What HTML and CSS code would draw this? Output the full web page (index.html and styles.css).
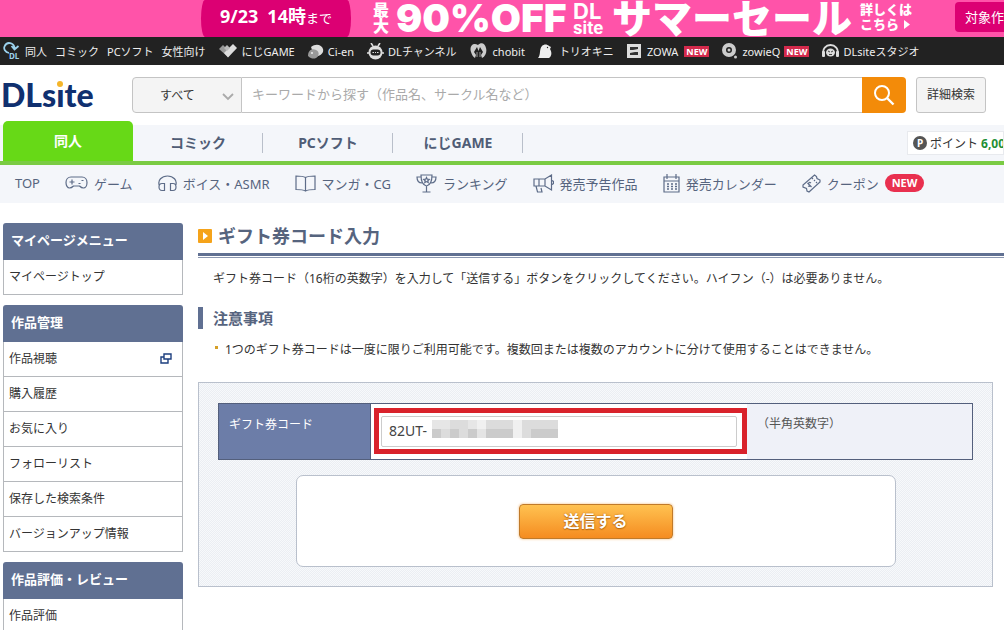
FILE: index.html
```html
<!DOCTYPE html>
<html lang="ja">
<head>
<meta charset="utf-8">
<title>ギフト券コード入力</title>
<link rel="stylesheet" href="styles.css">
</head>
<body>
<div class="page">
  <div class="banner">
    <div class="deadline"><b>9/23&ensp;14時</b>まで</div>
    <div class="sale">
      <span class="stack stack-max"><span>最</span><span>大</span></span>
      <span class="off">90%OFF</span>
      <span class="stack stack-site"><span>DL</span><span>site</span></span>
      <span class="sale-name">サマーセール</span>
      <span class="stack stack-more"><span>詳しくは</span><span>こちら<svg width="8" height="9" viewBox="0 0 8 9"><path d="M1 0l6 4.500-6 4.500z" fill="#fff"/></svg></span></span>
    </div>
    <a class="banner-btn" href="#">対象作品</a>
  </div>

  <nav class="services">
    <a href="#"><svg width="18" height="18" viewBox="0 0 18 18"><path d="M6 11C2 10 .5 7 1.500 4.500 3 1 6 .5 8.500 1.500c2.500 1 3 3 3 5M8.500 4l3 3.500L15.500 4" fill="none" stroke="#9cd3ee" stroke-width="1.800"/><text x="6" y="17" class="mini-dl">DL</text></svg>同人</a>
    <a href="#">コミック</a>
    <a href="#">PCソフト</a>
    <a href="#">女性向け</a>
    <a href="#" class="wide"><svg width="19" height="14" viewBox="0 0 19 14"><path d="M0 5l4-4 8 8-3 4z" fill="#999"/><path d="M5 9l9-9 4 4-9 9.500z" fill="#ddd"/><path d="M5 4l3-3 3 3-3 3z" fill="#bbb"/></svg>にじGAME</a>
    <a href="#" class="wide"><svg width="16" height="15" viewBox="0 0 16 15"><path d="M3 3C8-1 14 1 15 5c1 4-2 6-5 7l-3 2z" fill="#ddd"/><path d="M0 12C0 6 4 4 8 6c4 2 3 6 0 8-2 1-5 1-8-2z" fill="#999"/><circle cx="4" cy="9" r="1" fill="#eee"/></svg>Ci-en</a>
    <a href="#" class="wide"><svg width="17" height="17" viewBox="0 0 17 17"><path d="M4 0l2 3M13 0l-2 3M0 10h17" stroke="#ddd" stroke-width="1.600"/><circle cx="8.500" cy="9.500" r="7" fill="#ddd"/><rect x="3.500" y="6.500" width="10" height="6" rx="3" fill="#222"/><path d="M5.500 9.500h1.500m1 0h1m1 0h1.500" stroke="#ddd"/></svg>DLチャンネル</a>
    <a href="#" class="wide spaced"><svg width="17" height="16" viewBox="0 0 17 16"><path d="M8 2C3-1-1 3 1 9c1 3 2 5 4 6l1-3-2-3 3-5 1.500 4L10 4l3 5-2 3 1 3c4-2 5-7 4-10-1-5-5-6-8-3z" fill="#ccc"/><path d="M7 9v5M10 9v5" stroke="#999"/></svg>chobit</a>
    <a href="#" class="wide spaced"><svg width="15" height="15" viewBox="0 0 15 15"><path d="M0 14C3 11 1 5 4 2c2-2 5-2 7 0l2 1-1 2c2 3 2 7-1 9H2z" fill="#eee"/><circle cx="9.500" cy="3.500" r=".7" fill="#222"/></svg>トリオキニ</a>
    <a href="#" class="wide spaced"><svg width="14" height="14" viewBox="0 0 14 14"><rect width="14" height="14" fill="#ddd"/><path d="M3 3h8v2L6 6H3zM11 11H3V9l5-1h3z" fill="#333"/></svg>ZOWA<span class="new-tag">NEW</span></a>
    <a href="#" class="wide"><svg width="16" height="16" viewBox="0 0 16 16"><circle cx="7" cy="7" r="5" fill="none" stroke="#ccc" stroke-width="4"/><circle cx="7" cy="7" r="1.500" fill="#ccc"/><circle cx="13.500" cy="14" r="1.500" fill="#ccc"/></svg>zowieQ<span class="new-tag">NEW</span></a>
    <a href="#" class="wide"><svg width="17" height="14" viewBox="0 0 17 14"><path d="M1.500 10C0 5 4 1 8.500 1S17 5 15.500 10" fill="none" stroke="#ddd" stroke-width="1.800"/><rect y="7" width="3" height="6" rx="1" fill="#ddd"/><rect x="14" y="7" width="3" height="6" rx="1" fill="#ddd"/><ellipse cx="8.500" cy="8.500" rx="4.500" ry="4" fill="#ddd"/><path d="M6 7l2 1m3-1l-2 1M7 10.500h3" stroke="#444"/></svg>DLsiteスタジオ</a>
  </nav>

  <header class="search-row">
    <a class="logo" href="#">DLs<span class="logo-i">ı</span>te</a>
    <form class="search">
      <span class="select-wrap">
        <select aria-label="カテゴリ"><option>すべて</option></select>
        <svg class="chev" width="12" height="8" viewBox="0 0 12 8"><path d="M1 1l5 5 5-5" fill="none" stroke="#aaa" stroke-width="1.800"/></svg>
      </span>
      <input type="text" aria-label="検索" placeholder="キーワードから探す（作品名、サークル名など）">
      <button type="button" aria-label="検索する"><svg width="22" height="22" viewBox="0 0 22 22"><circle cx="9" cy="9" r="7" fill="none" stroke="#fff" stroke-width="2"/><path d="M14 14l6.500 6.500" stroke="#fff" stroke-width="2.400"/></svg></button>
    </form>
    <a class="detail-btn" href="#">詳細検索</a>
  </header>

  <nav class="tabs">
    <a class="tab active" href="#">同人</a>
    <a class="tab" href="#">コミック</a>
    <a class="tab" href="#">PCソフト</a>
    <a class="tab" href="#">にじGAME</a>
    <div class="points"><span class="p-icon">P</span>ポイント<b>6,000</b></div>
  </nav>

  <nav class="subnav">
    <a href="#">TOP</a>
    <a href="#"><svg width="23" height="14" viewBox="0 0 23 14"><path d="M6 1h11c3 0 5 2.500 5 5.500S20.500 12 18.500 12s-3-1-4-2h-6c-1 1-2 2-4 2S1 9.500 1 6.500 3 1 6 1zM4.500 6h5M7 3.500v5"/><path d="M13.500 7.500h2m1-3h2"/></svg>ゲーム</a>
    <a href="#"><svg width="19" height="17" viewBox="0 0 19 17"><path d="M1.500 11C-1 5 4 1 9.500 1S20 5 17.500 11M6.500 8.500v7H4c-2 0-3-1.500-3-3.500s1-3.500 3-3.500zM12.500 8.500v7H15c2 0 3-1.500 3-3.500s-1-3.500-3-3.500z"/></svg>ボイス・ASMR</a>
    <a href="#"><svg width="21" height="17" viewBox="0 0 21 17"><path d="M10.500 2.500C8 1 4 1 1 1v13.500c3 0 7 0 9.500 1.500 2.500-1.500 6.500-1.500 9.500-1.500V1c-3 0-7 0-9.500 1.500zV16"/></svg>マンガ・CG</a>
    <a href="#"><svg width="21" height="19" viewBox="0 0 21 19"><path d="M5 1h11c0 6-1 10-5.500 11C6 11 5 7 5 1zM5 3H1c0 4 2 6 5 6M16 3h4c0 4-2 6-5 6M10.500 12v6M6.500 18h8"/><path d="M10.500 3.500l.8 1.700 1.900.2-1.400 1.300.4 1.900-1.700-1-1.700 1 .4-1.900-1.400-1.300 1.900-.2z"/></svg>ランキング</a>
    <a href="#"><svg width="21" height="19" viewBox="0 0 21 19"><path d="M1 5h11l6.500-4v15L12 12H1zM6 5v7M12 5v7M3 12l1.500 6H9l-1-4M19 6.500l1.500 1v2l-1.500 1"/></svg>発売予告作品</a>
    <a href="#"><svg width="17" height="19" viewBox="0 0 17 19"><path d="M1 3h15v15H1zM1 7h15M4 0v5M13 0v5"/><path d="M4 10h2m2 0h2m2 0h2M4 12.500h2m2 0h2m2 0h2M4 15h2m2 0h2m2 0h2" stroke-width="1.600"/></svg>発売カレンダー</a>
    <a href="#"><svg width="19" height="19" viewBox="0 0 19 19"><path d="M12.500 1l2 1.500.5 2 3 1.500v2L7 18l-2-1-.5-2.500L1 13v-2zM10 4l1 1m1 1l1 1m1 1l1 1"/><path d="M9 9c-2-1.500-3 .5-2 1.500s1.500 2.500-1 1.500M5.500 9l4 4"/></svg>クーポン<span class="new-pill">NEW</span></a>
  </nav>

  <div class="columns">
    <aside class="side">
      <section class="menu">
        <h2>マイページメニュー</h2>
        <a href="#">マイページトップ</a>
      </section>
      <section class="menu">
        <h2>作品管理</h2>
        <a href="#">作品視聴<svg width="12" height="11" viewBox="0 0 12 11"><path d="M4 1h7v5H4zM4 4H1v6h7V6" fill="none" stroke="#1d3f7f" stroke-width="1.400"/></svg></a>
        <a href="#">購入履歴</a>
        <a href="#">お気に入り</a>
        <a href="#">フォローリスト</a>
        <a href="#">保存した検索条件</a>
        <a href="#">バージョンアップ情報</a>
      </section>
      <section class="menu">
        <h2>作品評価・レビュー</h2>
        <a href="#">作品評価</a>
      </section>
    </aside>

    <main class="main">
      <h1><svg width="14" height="14" viewBox="0 0 14 14"><rect width="14" height="14" rx="1" fill="#f5a31a"/><path d="M5 3l5 4-5 4z" fill="#fff"/></svg>ギフト券コード入力</h1>
      <p class="lead">ギフト券コード（16桁の英数字）を入力して「送信する」ボタンをクリックしてください。ハイフン（-）は必要ありません。</p>
      <h2 class="sub">注意事項</h2>
      <ul class="notes"><li>1つのギフト券コードは一度に限りご利用可能です。複数回または複数のアカウントに分けて使用することはできません。</li></ul>
      <form class="panel">
        <div class="field">
          <label for="code">ギフト券コード</label>
          <div class="entry">
            <div class="highlight">
              <input id="code" type="text" value="82UT-">
              <svg class="mosaic" width="126" height="18" viewBox="0 0 14 2" shape-rendering="crispEdges">
                <rect width="14" height="2" fill="#dcdcdc"/>
                <path d="M0 0h2v1H0zM4 0h2v1H4z" fill="#e6e6e6"/>
                <path d="M5 0h1v1H5zM9 0h1v2H9z" fill="#f0f0f0"/>
                <path d="M0 1h1v1H0zM2 1h1v1H2zM4 1h1v1H4zM6 1h2v1H6zM8 1h1v1H8zM11 1h3v1h-3z" fill="#cbcbcb"/>
                <path d="M5 1h1v1H5z" fill="#e4e4e4"/>
              </svg>
            </div>
          </div>
          <span class="hint">（半角英数字）</span>
        </div>
        <div class="submit-box"><button type="button">送信する</button></div>
      </form>
    </main>
  </div>
</div>
</body>
</html>
```
FILE: styles.css
```css
* { box-sizing: border-box; }
body {
  margin: 0;
  background: #fff;
  color: #333;
  font-family: "Noto Sans", "Noto Sans CJK JP", sans-serif;
  font-size: 12px;
}
a { color: inherit; text-decoration: none; }
svg { flex: none; }
input, button, select { font-family: inherit; margin: 0; }
h1, h2, p, ul { margin: 0; padding: 0; }
.page { height: 100vh; overflow: hidden; }

.banner {
  display: flex;
  height: 37px;
  padding-left: 201px;
  background: #ff53a9;
  color: #fff;
  overflow: hidden;
  white-space: nowrap;
}
.deadline {
  flex: none;
  width: 150px;
  border-radius: 4px / 50%;
  background: #dc0073;
  font-size: 13px;
  line-height: 33px;
  text-align: center;
}
.deadline b { font-size: 18px; }
.sale {
  display: flex;
  flex: none;
  align-items: center;
  width: 604px;
  padding: 0 0 1px 22px;
  font-weight: 900;
}
.stack { display: flex; flex-direction: column; flex: none; }
.stack-max { width: 23px; font-size: 16px; line-height: 16px; }
.off { flex: none; width: 177px; font-family: Inter, sans-serif; font-size: 39px; line-height: 36px; }
.stack-site { width: 39px; font-family: Inter, sans-serif; font-size: 17px; line-height: 14px; font-weight: 700; }
.stack-site span:first-child { font-size: 22px; line-height: 19px; }
.sale-name { flex: none; width: 248px; font-size: 40px; line-height: 36px; }
.stack-more { padding-bottom: 2px; font-size: 13px; line-height: 15px; }
.stack-more svg { margin-left: 4px; }
.banner-btn {
  flex: none;
  align-self: flex-start;
  margin-top: 2px;
  padding: 0 10px;
  border-radius: 4px;
  background: #dc0073;
  font-size: 13px;
  line-height: 30px;
}

.services {
  display: flex;
  align-items: center;
  gap: 8px;
  height: 28px;
  padding-left: 3px;
  background: #222;
  color: #eee;
  font-size: 11px;
  white-space: nowrap;
}
.services a { display: flex; align-items: center; gap: 4px; }
.services .wide { margin-left: 5px; }
.services .spaced { gap: 6px; }
.mini-dl { fill: #9cd3ee; font-size: 8px; font-weight: 700; }
.new-tag {
  padding: 0 2px;
  background: #d42a4c;
  color: #fff;
  font-size: 9px;
  font-weight: 700;
  line-height: 11px;
}

.search-row {
  display: flex;
  align-items: center;
  height: 60px;
  padding-right: 18px;
}
.logo {
  flex: none;
  width: 132px;
  padding-left: 1px;
  color: #10306f;
  font-family: Lato, sans-serif;
  font-size: 32px;
  font-weight: 900;
  line-height: 36px;
}
.logo-i { position: relative; }
.logo-i::before {
  content: "";
  position: absolute;
  top: 6px;
  left: 1px;
  width: 6px;
  height: 6px;
  border-radius: 50%;
  background: #f5b52a;
}
.search { display: flex; flex: 1; height: 36px; }
.select-wrap { position: relative; width: 110px; }
.select-wrap select {
  width: 100%;
  height: 100%;
  padding: 0 0 0 27px;
  appearance: none;
  border: 1px solid #c4c4c4;
  border-radius: 4px 0 0 4px;
  background: #f4f4f4;
  color: #333;
  font-size: 12px;
}
.chev { position: absolute; right: 8px; top: 16px; }
.search input {
  flex: 1;
  min-width: 0;
  padding: 0 10px 2px;
  border: solid #c4c4c4;
  border-width: 1px 0;
  font-size: 13px;
}
.search input::placeholder { color: #aaa; }
.search button {
  display: flex;
  align-items: center;
  justify-content: center;
  width: 44px;
  border: 0;
  border-radius: 0 4px 4px 0;
  background: #f38b09;
}
.detail-btn {
  width: 70px;
  margin-left: 10px;
  border: 1px solid #c4c4c4;
  border-radius: 3px;
  background: #f4f4f4;
  line-height: 34px;
  text-align: center;
}

.tabs {
  display: flex;
  height: 40px;
  padding-left: 3px;
  border-bottom: 4px solid #7acb43;
  background: #f4f6fa;
  color: #505d76;
  white-space: nowrap;
}
.tab {
  position: relative;
  width: 130px;
  font-size: 14px;
  font-weight: 700;
  line-height: 36px;
  text-align: center;
}
.tab:not(.active)::after {
  content: "";
  position: absolute;
  right: 0;
  top: 8px;
  height: 20px;
  border-right: 1px solid #b9bfca;
}
.tab.active {
  margin-top: -4px;
  border-radius: 5px 5px 0 0;
  background: #67d917;
  color: #fff;
  line-height: 40px;
}
.points {
  display: flex;
  align-items: center;
  flex: none;
  gap: 3px;
  width: 97px;
  height: 24px;
  margin: 6px 0 0 auto;
  padding-left: 5px;
  overflow: hidden;
  border: 1px solid #e8eaee;
  background: #fff;
  color: #333;
}
.points b { color: #1e8f35; }
.p-icon {
  flex: none;
  width: 14px;
  border-radius: 50%;
  background: #555;
  color: #fff;
  font-size: 10px;
  font-weight: 700;
  line-height: 14px;
  text-align: center;
}

.subnav {
  display: flex;
  align-items: center;
  gap: 25px;
  height: 38px;
  padding: 0 0 2px 15px;
  background: #f4f6fa;
  color: #56647e;
  font-size: 13px;
  white-space: nowrap;
}
.subnav a { display: flex; align-items: center; gap: 6px; }
.subnav svg { fill: none; stroke: #5d6c88; stroke-width: 1.2; }
.new-pill {
  padding: 0 7px;
  border-radius: 9px;
  background: #e9304f;
  color: #fff;
  font-size: 11px;
  font-weight: 700;
  line-height: 18px;
}

.columns { display: flex; gap: 15px; padding: 20px 0 0 3px; }
.side { display: flex; flex: none; flex-direction: column; gap: 10px; width: 180px; }
.menu h2 {
  height: 37px;
  padding-left: 8px;
  border-radius: 3px 3px 0 0;
  background: #607092;
  color: #fff;
  font-size: 13px;
  line-height: 35px;
}
.menu a {
  display: flex;
  align-items: center;
  justify-content: space-between;
  height: 35px;
  padding: 0 10px 2px 5px;
  border: solid #b5b8bc;
  border-width: 0 1px 1px;
}

.main { flex: 1; min-width: 0; }
.main h1 {
  display: flex;
  align-items: center;
  gap: 6px;
  height: 30px;
  padding-bottom: 4px;
  color: #56647e;
  font-size: 18px;
  line-height: 26px;
}
.lead {
  padding: 13px 0 0 15px;
  border-top: 3px solid #607092;
  line-height: 20px;
  white-space: nowrap;
  box-shadow: inset 0 1px #fff, inset 0 2px #8b97b0;
}
.sub {
  margin-top: 18px;
  padding-left: 10px;
  border-left: 5px solid #607092;
  color: #56647e;
  font-size: 15px;
  line-height: 22px;
}
.notes { margin-top: 11px; padding-left: 15px; list-style: none; }
.notes li {
  display: flex;
  gap: 7px;
  padding-left: 2px;
  line-height: 20px;
  white-space: nowrap;
}
.notes li::before { content: ""; width: 3px; height: 3px; margin-top: 6px; background: #d6a028; }

.panel {
  margin: 22px 11px 0 0;
  padding: 20px 19px 19px;
  border: 1px solid #b9c0cc;
  background: conic-gradient(#ebeef3 25%, #f7f9fb 0 50%, #ebeef3 0 75%, #f7f9fb 0) 0 0 / 2px 2px;
}
.field {
  display: flex;
  height: 57px;
  border: 1px solid #535f7c;
  background: #eff1f8;
}
.field label {
  flex: none;
  width: 152px;
  padding: 11px 0 0 10px;
  border-right: 1px solid #535f7c;
  background: #6c7da8;
  color: #fff;
  line-height: 20px;
}
.entry { flex: 1; padding: 4px 0 0 3px; background: #fff; }
.highlight { position: relative; padding: 3px 5px 2px 2px; border: 5px solid #d9222b; }
.highlight input {
  display: block;
  width: 100%;
  height: 31px;
  padding: 0 7px 2px;
  border: 1px solid #ccc;
  border-radius: 2px;
  color: #444;
  font-size: 14px;
}
.mosaic { position: absolute; left: 53px; top: 7px; }
.hint { flex: none; width: 225px; padding: 10px 0 0 10px; line-height: 20px; color: #555; }
.submit-box {
  display: flex;
  align-items: center;
  justify-content: center;
  width: 80%;
  max-width: 600px;
  height: 92px;
  margin: 15px auto 0;
  border: 1px solid #b9c0cc;
  border-radius: 7px;
  background: #fff;
}
.submit-box button {
  width: 154px;
  height: 35px;
  padding: 0 0 2px;
  border: 1px solid #c07a2a;
  border-radius: 4px;
  background: linear-gradient(#ffc251, #f58c20);
  box-shadow: 0 0 2px 1px #fbe0c0;
  color: #fff;
  font-size: 16px;
  font-weight: 700;
  text-shadow: 0 0 2px #b56a10, 0 1px 1px #b56a10;
}
```
